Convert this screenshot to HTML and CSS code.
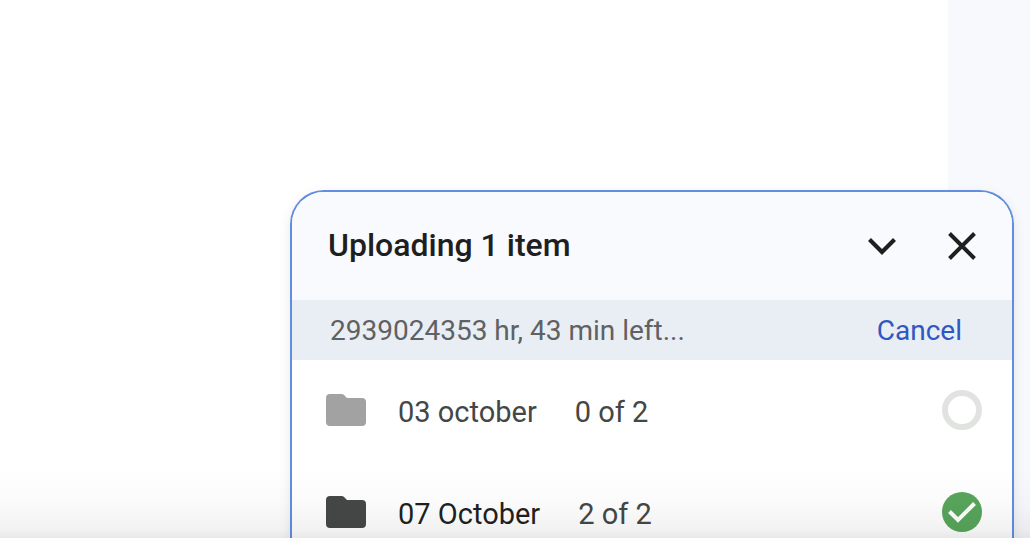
FILE: index.html
```html
<!DOCTYPE html>
<html lang="en">
<head>
<meta charset="utf-8">
<meta name="viewport" content="width=device-width, initial-scale=1">
<title>Uploads</title>
<link rel="stylesheet" href="styles.css">
</head>
<body>
<div class="page">
  <main class="content"></main>
  <aside class="side"></aside>
</div>
<section class="upload" aria-labelledby="upload-title">
  <header class="upload-header">
    <h1 class="upload-title" id="upload-title">Uploading 1 item</h1>
    <button class="icon-button" type="button" aria-label="Collapse">
      <svg width="40" height="40" viewBox="0 0 40 40"><path d="M7.500 13.500 20 26l12.500-12.500" fill="none" stroke="#1f1f1f" stroke-width="4.200"/></svg>
    </button>
    <button class="icon-button" type="button" aria-label="Close">
      <svg width="40" height="40" viewBox="0 0 40 40"><path d="M7.500 7.500l25 25M32.500 7.500l-25 25" fill="none" stroke="#1f1f1f" stroke-width="4"/></svg>
    </button>
  </header>
  <div class="status">
    <span class="status-text">2939024353 hr, 43 min left...</span>
    <button class="cancel" type="button">Cancel</button>
  </div>
  <ul class="files">
    <li class="file">
      <svg class="folder" width="40" height="32" viewBox="0 0 40 32" aria-hidden="true"><path d="M4 0h11.500a4 4 0 0 1 2.800 1.200L21 4h15a4 4 0 0 1 4 4v20a4 4 0 0 1-4 4H4a4 4 0 0 1-4-4V4a4 4 0 0 1 4-4z" fill="#a2a2a2"/></svg>
      <span class="name">03 october</span>
      <span class="count">0 of 2</span>
      <svg class="state" width="40" height="40" viewBox="0 0 40 40" role="img" aria-label="Pending"><circle cx="20" cy="20" r="17" fill="none" stroke="#e1e3e1" stroke-width="6"/></svg>
    </li>
    <li class="file file-done">
      <svg class="folder" width="40" height="32" viewBox="0 0 40 32" aria-hidden="true"><path d="M4 0h11.500a4 4 0 0 1 2.800 1.200L21 4h15a4 4 0 0 1 4 4v20a4 4 0 0 1-4 4H4a4 4 0 0 1-4-4V4a4 4 0 0 1 4-4z" fill="#444746"/></svg>
      <span class="name">07 October</span>
      <span class="count">2 of 2</span>
      <svg class="state" width="40" height="40" viewBox="0 0 40 40" role="img" aria-label="Complete"><circle cx="20" cy="20" r="20" fill="#57a55a"/><path d="M7.500 19.500l8.500 8.500L32.500 11.500" fill="none" stroke="#fff" stroke-width="4"/></svg>
    </li>
  </ul>
</section>
<div class="shade"></div>
</body>
</html>
```
FILE: styles.css
```css
* {
  box-sizing: border-box;
}

body {
  margin: 0;
  height: 100vh;
  overflow: hidden;
  position: relative;
  font-family: Roboto, "Liberation Sans", sans-serif;
  background: #fff;
}

.page {
  display: flex;
  height: 100%;
}

.content {
  flex: 1;
}

.side {
  width: 82px;
  background: #f8f9fd;
}

.upload {
  position: absolute;
  top: 190px;
  bottom: 0;
  left: 290px;
  right: 16px;
  overflow: hidden;
  border: 2px solid #628de0;
  border-bottom: 0;
  border-radius: 34px 34px 0 0;
  background: #fff;
  box-shadow: 0 4px 12px rgba(60, 64, 67, 0.12);
}

.upload-header {
  display: flex;
  align-items: center;
  gap: 40px;
  height: 108px;
  padding: 0 30px 0 36px;
  background: #f8fafd;
}

.upload-title {
  flex: 1;
  margin: 0;
  padding-bottom: 2px;
  font-size: 32px;
  line-height: 40px;
  font-weight: 500;
  color: #1f1f1f;
}

.icon-button {
  display: flex;
  padding: 0;
  border: 0;
  background: none;
}

.status {
  display: flex;
  align-items: center;
  justify-content: space-between;
  height: 60px;
  padding: 0 50px 0 38px;
  background: #e9eef5;
  font-size: 28px;
  color: #5f6162;
}

.cancel {
  padding: 0;
  border: 0;
  background: none;
  font: inherit;
  color: #2f58c0;
}

.files {
  margin: 0;
  padding: 0;
  list-style: none;
}

.file {
  display: flex;
  align-items: center;
  height: 102px;
  padding: 0 30px 2px 34px;
  font-size: 29px;
  line-height: 36px;
  color: #444746;
}

.name,
.count {
  padding-top: 4px;
}

.name {
  margin: 0 38px 0 32px;
}

.file-done .name {
  color: #1f1f1f;
}

.state {
  margin-left: auto;
}

.shade {
  position: absolute;
  left: 0;
  right: 0;
  bottom: 0;
  height: 70px;
  pointer-events: none;
  background: linear-gradient(rgba(30, 30, 40, 0), rgba(30, 30, 40, 0.02) 50%, rgba(30, 30, 40, 0.06) 88%, rgba(30, 30, 40, 0.1));
}
```
